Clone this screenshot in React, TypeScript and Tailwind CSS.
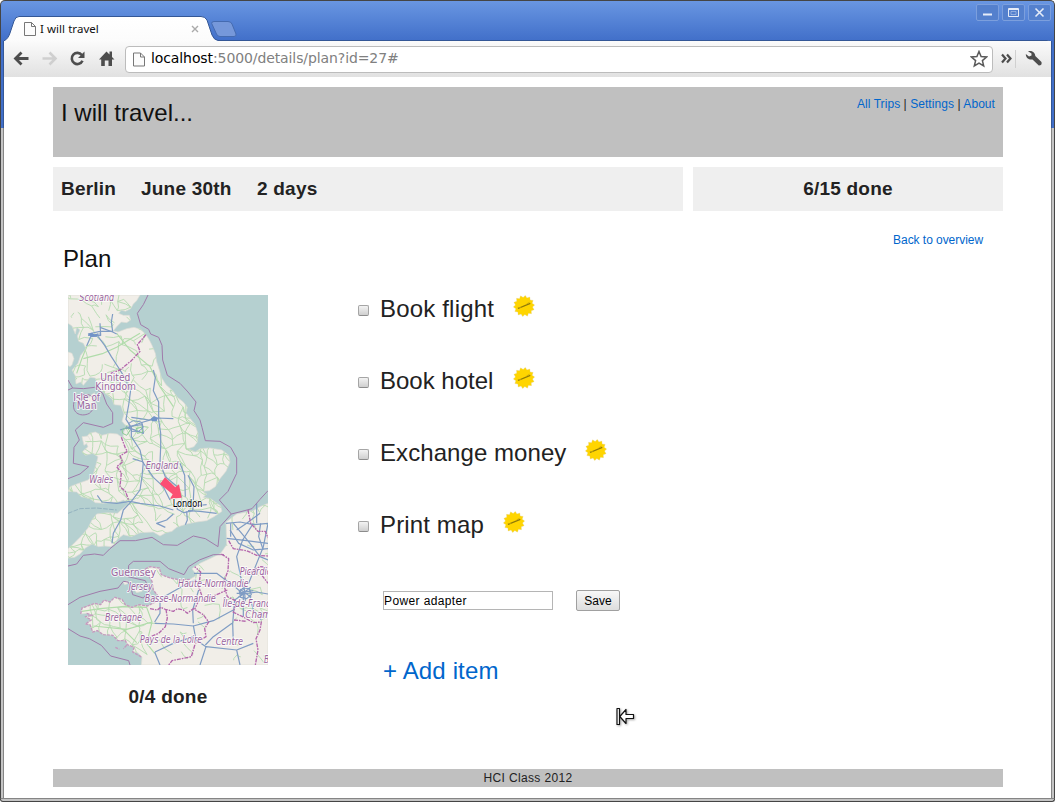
import React from "react";

const LAND_GB =
  "M24,15 L240,15 L230,32 L220,42 L212,56 L196,64 L184,60 L176,70 L190,76 L208,76 L212,90 L200,98 L184,96 L172,108 L160,122 L174,126 L200,116 L222,112 L242,118 L258,134 L268,150 L276,166 L286,190 L290,215 L298,240 L304,262 L318,284 L338,302 L352,322 L370,336 L382,352 L378,368 L390,385 L404,402 L414,430 L412,456 L402,470 L384,476 L406,486 L420,476 L450,474 L486,480 L506,496 L510,516 L498,544 L480,566 L466,590 L448,602 L428,604 L440,612 L430,622 L452,626 L482,648 L486,664 L462,680 L440,692 L410,696 L380,702 L350,712 L336,724 L318,728 L300,738 L280,726 L240,728 L214,740 L190,734 L172,748 L164,762 L152,770 L134,768 L116,770 L96,762 L76,774 L60,792 L44,802 L24,804 L24,776 L44,758 L64,738 L84,714 L96,690 L110,672 L140,668 L172,670 L188,656 L206,640 L190,630 L172,638 L150,636 L130,640 L106,638 L90,626 L64,620 L50,606 L24,604 L30,590 L56,580 L84,570 L100,552 L108,524 L114,500 L98,490 L76,496 L66,486 L84,470 L74,450 L88,430 L106,426 L126,436 L150,430 L172,432 L188,444 L192,424 L200,410 L186,394 L192,372 L182,346 L162,344 L156,326 L128,304 L116,296 L106,264 L90,262 L70,286 L62,276 L48,282 L46,258 L36,240 L54,220 L62,196 L78,176 L70,160 L56,154 L52,138 L60,120 L50,112 L46,132 L36,108 L24,100 Z";
const LAND_FR =
  "M498,696 L530,672 L580,662 L600,650 L624,640 L624,1125 L244,1125 L246,1102 L234,1088 L218,1086 L222,1072 L202,1064 L196,1052 L174,1052 L158,1036 L130,1034 L112,1022 L98,1026 L90,1004 L76,1002 L94,990 L76,980 L98,976 L80,970 L62,972 L66,954 L88,946 L104,940 L122,944 L132,930 L150,936 L164,922 L186,928 L196,944 L216,952 L238,944 L262,948 L286,936 L294,918 L280,900 L276,874 L254,838 L270,830 L298,834 L304,854 L330,864 L362,870 L390,868 L410,856 L396,836 L420,820 L458,802 L482,790 L500,764 Z";
const LAND_SMALL = [
  "M24,186 L36,190 L42,206 L36,224 L30,230 L24,226 Z",
  "M76,338 L92,316 L104,308 L102,330 L90,344 Z",
  "M66,440 L84,438 L92,452 L72,466 Z",
  "M190,876 L202,872 L206,880 L194,884 Z",
  "M222,898 L240,896 L246,904 L230,908 Z",
];

const ADMIN_SEA = [
  "M264,15 L250,44 L232,70 L242,104 L266,118 L272,132 L296,142 L306,166 L308,210 L322,256 L360,280 L384,306 L408,336 L402,362 L420,390 L426,412 L436,452 L480,454 L512,472 L530,504 L530,550 L504,604 L478,630 L514,672 L480,710 L474,770 L436,746 L400,738 L352,766 L310,764 L276,742 L226,752 L180,752 L150,776 L130,796 L104,792 L70,796 L50,822 L24,828",
  "M24,270 L38,294 L24,300 M38,294 L70,296 L104,292 L128,310 L140,342 L158,368 L158,400 L130,412 L70,398 L46,420 L58,450 L42,472 L40,520 L86,530 L60,552 L24,566",
  "M44,330 C30,366 60,384 88,370 C112,350 106,318 84,314 C62,312 52,316 44,330",
  "M24,944 L60,922 L120,904 L174,894 L190,874 L204,876 L212,890 L218,914 L250,924 L268,900 L256,872 L204,860 L206,826 L220,814 L300,814 L326,836 L372,854 L386,830 L418,810 L460,794 L492,794",
  "M24,1016 L60,1038 L88,1046 L124,1066 L152,1098 L206,1112 L210,1125",
  "M514,672 L546,664 L576,656 L600,628 L624,602",
];
const ADMIN_LAND = [
  "M258,134 L232,164 L240,184 L214,212 L180,240 L152,250",
  "M184,442 L196,474 L202,484 L180,498 L188,516 L170,530 L184,548 L180,590 L196,604 L206,630",
  "M564,660 L572,700 L594,724 L616,724 L624,744",
  "M506,752 L520,776 L560,782 L590,796 L624,798",
  "M484,792 L506,806 L504,842 L490,880 L502,920 L530,934 L520,966",
  "M502,900 L460,918 L430,930 L416,890 L422,846 L404,830",
  "M270,956 L292,960 L302,952 L316,958 L340,964 L352,956 L370,960 L382,970 L400,956 L430,974 L446,996 L434,1016 L438,1040 L406,1060 L394,1100 L366,1106 L336,1112 L326,1125",
  "M318,958 L322,984 L316,1010 L296,1030 L248,1050",
  "M518,966 L548,980 L580,998 L604,996 L600,1020 L588,1046 L594,1080 L586,1125",
  "M560,852 L600,830 L624,832 M606,856 L624,880 M416,932 L404,958 M522,990 L560,994",
];
const MOTORWAYS = [
  "M158,72 L154,96 L158,124 L120,124 L84,132 M120,100 L122,136 L92,140 L80,168 M110,134 L134,166 L154,200 L180,240 L192,260 L212,300 L206,345 L198,388 L214,412 L214,440 L240,480 L248,516 L280,562 L310,590 L330,630",
  "M84,136 L120,132 M120,112 L158,126 L170,132",
  "M280,240 L286,262 L280,302 L296,336 L296,390 L302,430 L302,470 L300,520 L316,560 L352,590 L364,622",
  "M214,382 L240,386 L266,390 L290,384 L340,386 M180,420 L212,410 L250,396 L286,386 M198,410 L250,430 L246,400",
  "M250,516 L246,560 L240,600 L214,634 L190,660 L182,690 L160,730 L156,760 M218,506 L250,516",
  "M112,616 L126,636 L170,640 L210,634 L240,640 L300,648 L340,660",
  "M360,520 L374,556 L376,620 M384,556 L402,590 L400,630 M340,648 L400,648 L440,644",
  "M340,672 L320,690 L290,700 L316,712 M380,664 L382,690 L376,704 M384,662 L420,664 L470,670",
  "M498,700 L540,696 L580,704 L624,700 M520,700 L570,760 L600,800 L624,810 M580,700 L548,750 L530,800 L550,900 M500,745 L560,752 L624,760",
  "M530,720 L560,700 L600,670 M510,720 L536,760 L580,780 L624,776 M602,700 L596,740 L610,780",
  "M402,850 L470,850 L524,890 L550,912 L590,906 L624,912 M550,912 L524,930 L518,1000 L520,1060 M550,912 L550,980 M566,880 L610,770 L624,700",
  "M284,996 L300,970 L300,936 L312,920 L362,892 L404,870 M284,1000 L340,1002 L400,1008 L460,992 L520,960 M400,1000 L398,960 L416,900 M400,1006 L408,1050 L438,1070 L530,1080 L580,1060 M438,1070 L420,1125 M285,1086 L340,1060 L400,1040 M284,1086 L300,1125 M530,1080 L540,1125",
  "M436,1065 L460,1040 L516,1000 M590,700 L590,640 M512,740 L512,700 M604,990 L580,960 L570,920",
  "M538,904 L550,894 L568,896 L574,914 L560,926 L542,922 Z M530,910 L580,902 M552,886 L556,934 M536,920 L572,892 M540,898 L574,922",
  "M350,640 L378,634 L400,646 L398,662 L372,668 L352,658 Z",
];

function roadNetwork(): string {
  let seed = 4177;
  const rnd = () => {
    seed = (seed * 16807) % 2147483647;
    return seed / 2147483647;
  };
  const step = 27;
  const cols = 25;
  const rows = 42;
  const pts: [number, number][][] = [];
  for (let r = 0; r < rows; r++) {
    pts.push([]);
    for (let c = 0; c < cols; c++) {
      pts[r].push([10 + c * step + (rnd() - 0.5) * 26, 5 + r * step + (rnd() - 0.5) * 26]);
    }
  }
  let d = "";
  const link = (a: [number, number], b: [number, number]) => {
    const mx = (a[0] + b[0]) / 2 + (rnd() - 0.5) * 10;
    const my = (a[1] + b[1]) / 2 + (rnd() - 0.5) * 10;
    d += `M${a[0].toFixed(1)},${a[1].toFixed(1)}L${mx.toFixed(1)},${my.toFixed(1)}L${b[0].toFixed(1)},${b[1].toFixed(1)}`;
  };
  for (let r = 0; r < rows - 1; r++) {
    for (let c = 0; c < cols - 1; c++) {
      const inFrance = r > 24 && c > 8;
      const north = r < 11;
      const p = inFrance ? 0.15 : north ? 0.42 : 0.8;
      if (rnd() < p) link(pts[r][c], pts[r][c + 1]);
      if (rnd() < p) link(pts[r][c], pts[r + 1][c]);
      if (rnd() < p * 0.55) link(pts[r][c], pts[r + 1][c + 1]);
    }
  }
  return d;
}

const LABELS: [string, number, number, number, boolean][] = [
  ["Scotland", 58, 33, 104, true],
  ["United", 121, 274, 90, false],
  ["Kingdom", 106, 301, 122, false],
  ["Isle of", 40, 332, 80, false],
  ["Man", 50, 356, 60, false],
  ["England", 257, 536, 98, true],
  ["Wales", 88, 578, 72, true],
  ["Guernsey", 153, 858, 135, false],
  ["Jersey", 206, 899, 72, true],
  ["Haute-Normandie", 354, 890, 212, true],
  ["Basse-Normandie", 254, 936, 213, true],
  ["Picardie", 539, 856, 96, true],
  ["Île-de-France", 488, 951, 158, true],
  ["Cham", 556, 983, 76, true],
  ["Bretagne", 135, 993, 111, true],
  ["Pays de la Loire", 240, 1060, 186, true],
  ["Centre", 467, 1066, 82, true],
  ["B", 612, 1120, 16, true],
];

function TripMap() {
  return (
    <svg viewBox="24 15 600 1110" className="block h-[370px] w-[200px]" aria-label="Map of the trip">
      <defs>
        <clipPath id="land">
          <path d={LAND_GB} />
          <path d={LAND_FR} />
        </clipPath>
      </defs>
      <rect x="24" y="15" width="600" height="1110" fill="#b5d0d0" />
      <g fill="#f1eee8" stroke="#dcdcd4" strokeWidth="2">
        <path d={LAND_GB} />
        <path d={LAND_FR} />
        {LAND_SMALL.map((d) => (
          <path key={d} d={d} />
        ))}
      </g>
      <g fill="none" strokeLinejoin="round">
        <g clipPath="url(#land)">
          <path d={roadNetwork()} stroke="#b6dcb2" strokeWidth="2.8" />
          <path
            d="M80,170 L64,210 L50,250 M70,206 L130,190 L170,172 L240,130 M170,130 L210,180 L270,230 L300,290 L340,350 M66,964 L120,956 L190,950 L260,952 L276,996 L200,1018 L100,1008 M276,996 L260,1060 L284,1090 M190,1018 L230,1058"
            stroke="#b0dcaa"
            strokeWidth="3.5"
          />
        </g>
        <path
          d="M62,972 L66,954 L88,946 L104,940 L122,944 L132,930 L150,936 L164,922 L186,928 L196,944 L216,952 L238,944 L262,948 L286,936 L294,918 L280,900 L276,874 L254,838 L270,830 L298,834 L304,854 L330,864 L362,870 L390,868 M80,970 L98,976 L76,980 L94,990 L76,1002 L90,1004 L98,1026 L112,1022 L130,1034 L158,1036 L174,1052 L196,1052 L202,1064 L222,1072 L218,1086 L246,1102 M166,1072 L178,1078 M200,1066 L190,1076"
          stroke="#c49abf"
          strokeWidth="4"
          strokeDasharray="9 3"
        />
        <path d="M24,670 L60,656 L110,654 L170,660" stroke="#94b3c0" strokeWidth="3" strokeDasharray="14 4" />
        <g stroke="#7f9cc4" strokeWidth="3.6">
          {MOTORWAYS.map((d) => (
            <path key={d} d={d} />
          ))}
        </g>
        <path d="M84,132 L96,128 L104,134 L114,130 L110,140 L92,140 Z M272,386 L282,378 L294,384 L290,394 L276,394 Z" fill="#7294c8" />
        <path d="M186,420 L200,412 L210,422 L200,436 L188,430 Z M228,416 L244,412 L248,426 L232,430 Z" stroke="#8acb94" strokeWidth="3" />
        <path d="M206,400 L220,392 L244,396 L250,412 L236,424 L214,424 Z M214,408 L248,404" stroke="#7f9cc4" strokeWidth="3" />
        <g stroke="#a07bab" strokeWidth="3">
          {ADMIN_SEA.map((d) => (
            <path key={d} d={d} />
          ))}
        </g>
        <g stroke="#b466ac" strokeWidth="4" strokeDasharray="12 3 5 3">
          {ADMIN_LAND.map((d) => (
            <path key={d} d={d} />
          ))}
        </g>
      </g>
      <g fontFamily="'DejaVu Sans', sans-serif" fontSize="31" fill="#9a649e" stroke="#fff" strokeWidth="6" strokeOpacity="0.8" paintOrder="stroke" strokeLinejoin="round">
        {LABELS.map(([t, x, y, w, it]) => (
          <text key={t} x={x} y={y} textLength={w} lengthAdjust="spacingAndGlyphs" fontStyle={it ? "italic" : "normal"}>
            {t}
          </text>
        ))}
      </g>
      <path d="M315,562 L346,592 L357,583 L365,623 L330,626 L338,613 L300,582 Z" fill="#fb4f73" />
      <text x="338" y="650" fontFamily="'DejaVu Sans', sans-serif" fontSize="29" fill="#000" stroke="#fff" strokeWidth="5" strokeOpacity="0.8" paintOrder="stroke" textLength="89" lengthAdjust="spacingAndGlyphs">
        London
      </text>
    </svg>
  );
}

function Sun() {
  const pts = Array.from({ length: 28 }, (_, i) => {
    const a = (i / 28) * Math.PI * 2 - 0.1;
    const r = i % 2 ? 8.6 : 10.7;
    return `${(11 + r * Math.cos(a)).toFixed(2)},${(11 + r * Math.sin(a)).toFixed(2)}`;
  }).join(" ");
  return (
    <svg viewBox="0 0 22 22" className="h-[22px] w-[22px]">
      <polygon points={pts} fill="#ffd500" stroke="#dccb80" strokeWidth="0.3" />
      <path d="M5 13.5 L17.300 8.300" fill="none" stroke="#8f7a08" strokeWidth="1.300" />
      <path d="M4.800 12.600 L8 12.500 M13.500 9 L16.500 7.300" fill="none" stroke="#c7a60a" strokeWidth="0.8" />
    </svg>
  );
}

function PageIcon({ className }: { className: string }) {
  return (
    <svg viewBox="0 0 12 14" className={className} fill="#fcfcfc" stroke="#777" strokeWidth="1">
      <path d="M.5 .5 H7.5 L11.5 4.5 V13.5 H.5 Z M7.5 .5 V4.5 H11.5" />
    </svg>
  );
}

function WindowButton({ children }: { children: React.ReactNode }) {
  return (
    <div className="flex h-[17px] w-[23px] items-center justify-center rounded-[2px] border border-[#7c9fdd] bg-[#5480cd]">
      <svg viewBox="0 0 21 15" className="h-[15px] w-[21px]" fill="none" stroke="#e6ecf8">
        {children}
      </svg>
    </div>
  );
}

function TitleBar() {
  return (
    <div className="relative flex h-[41px] shrink-0 justify-between rounded-t-[5px] border-x border-t border-[#454545] bg-linear-to-b from-[#6996e2] to-[#416fc9]">
      <svg viewBox="0 0 1055 41" className="absolute -top-px -left-px h-[41px] w-[1055px]">
        <defs>
          <linearGradient id="tab" x1="0" y1="0" x2="0" y2="1">
            <stop offset="0" stopColor="#ffffff" />
            <stop offset="1" stopColor="#fbfbfb" />
          </linearGradient>
        </defs>
        <path d="M3.5,41 C7,40 9,36 10,33 L14,21 Q15.5,16.5 19,16.5 H201 Q205,16.5 207,20 L212,35 Q214,40 218,40.5 H1047 Q1051,40.5 1051.5,44 H3.5 Z" fill="url(#tab)" stroke="#345796" strokeWidth="1" />
        <path d="M214,21.5 H228 Q231,21.5 232,24 L236,34 Q236.500,36.500 234,36.500 H220 Q217.500,36.500 216.500,34 L211.700,23.500 Q211.500,21.500 214,21.500 Z" fill="#7698da" stroke="#456bb0" />
      </svg>
      <div className="relative mt-[20px] ml-[23px] flex h-[16px] w-[178px] items-center">
        <PageIcon className="h-[14px] w-[12px]" />
        <span className="ml-[4px] flex-1 font-['Noto_Sans',sans-serif] text-[11.500px] leading-[16px] tracking-[0.05px] whitespace-nowrap text-[#111]">I will travel</span>
        <svg viewBox="0 0 8 8" className="mr-[3px] h-[8px] w-[8px]" stroke="#aaa" strokeWidth="1.400">
          <path d="M1 1 L7 7 M7 1 L1 7" />
        </svg>
      </div>
      <div className="relative mt-[3px] mr-[3px] flex gap-[3px]">
        <WindowButton>
          <path d="M6 9.500 H15" strokeWidth="2" />
        </WindowButton>
        <WindowButton>
          <path d="M5.500 3.500 H15.500 V11.500 H5.500 Z M5.500 4.500 H15.500" strokeWidth="1" />
          <path d="M8 6.500 H13 V9.500 H8 Z" strokeWidth="0.8" opacity="0.5" />
        </WindowButton>
        <WindowButton>
          <path d="M6.500 3.500 L14.500 11.500 M14.500 3.500 L6.500 11.500" strokeWidth="1.600" />
        </WindowButton>
      </div>
    </div>
  );
}

function Toolbar() {
  return (
    <div className="flex h-[36px] shrink-0 items-center bg-linear-to-b from-[#fbfbfb] to-[#e1e1e1]">
      <svg viewBox="0 0 116 36" className="h-[36px] w-[116px] shrink-0" fill="none">
        <path d="M24.500 17.500 H13 M17.500 11.500 L11.500 17.500 L17.500 23.500" stroke="#4d4d4d" strokeWidth="2.800" />
        <path d="M38.500 17.500 H50 M45.500 11.500 L51.500 17.500 L45.500 23.500" stroke="#cfcfcf" strokeWidth="2.600" />
        <path d="M77.800 14 A5.600 5.600 0 1 0 78.500 19.800" stroke="#4d4d4d" strokeWidth="2.600" />
        <path d="M80.500 10.500 V17 H74 Z" fill="#4d4d4d" />
        <path d="M95 18.500 L102.500 10.500 L105.500 13.500 V10.500 H108 V16 L110.500 18.500 H108 V25 H104.500 V19.500 H100.800 V25 H97.200 V18.500 Z" fill="#4d4d4d" />
      </svg>
      <div className="ml-[5px] flex h-[27px] w-[868px] shrink-0 items-center rounded-[4px] border border-[#bcbcbc] bg-white">
        <PageIcon className="ml-[7px] h-[15px] w-[12px]" />
        <span className="-mt-[3px] ml-[6px] flex-1 font-['DejaVu_Sans',sans-serif] text-[14px] leading-[20px] tracking-[-0.1px] whitespace-nowrap text-[#808080]">
          <span className="text-black">localhost</span>:5000/details/plan?id=27#
        </span>
        <svg viewBox="0 0 18 18" className="mr-[4px] h-[18px] w-[18px]" fill="#fff" stroke="#5a5a5a" strokeWidth="1.500">
          <path d="M9 1.500 L11.100 6.600 L16.500 7 L12.400 10.600 L13.700 16 L9 13.100 L4.300 16 L5.600 10.600 L1.500 7 L6.900 6.600 Z" />
        </svg>
      </div>
      <svg viewBox="0 0 58 36" className="h-[36px] w-[58px] shrink-0" fill="none">
        <path d="M9 13.500 L12.500 17.500 L9 21.500 M14 13.500 L17.500 17.500 L14 21.500" stroke="#4d4d4d" strokeWidth="2.200" />
        <path d="M22.500 9 V27" stroke="#d0d0d0" />
        <path d="M35 10.300 C38 9.300 42 10.500 42.300 15 L48.500 21 Q49.300 24.500 45.800 24.500 L39.500 18.500 C36 19 33 17.500 32.800 13 L36 15.500 L38.500 14.500 L38.500 12.500 Z" fill="#4d4d4d" />
      </svg>
    </div>
  );
}

const ITEMS: [string, string][] = [
  ["Book flight", "w-[133px] tracking-[0.18px]"],
  ["Book hotel", "w-[133px]"],
  ["Exchange money", "w-[205px] tracking-[0.07px]"],
  ["Print map", "w-[123px] tracking-[0.13px]"],
];

function Page() {
  return (
    <div className="flex flex-1 flex-col bg-white pt-[10px] pr-[48px] pl-[49px] font-['Liberation_Sans',Arial,sans-serif] text-[12px] text-[#222]">
      <header className="flex h-[70px] shrink-0 justify-between bg-[#c0c0c0] px-[8px]">
        <h1 className="mt-[8px] text-[24px] leading-[36px] text-[#111]">I will travel...</h1>
        <nav className="mt-[8px] leading-[18px] tracking-[0.06px] text-[#222]">
          <a className="text-[#0066cc]">All Trips</a> | <a className="text-[#0066cc]">Settings</a> | <a className="text-[#0066cc]">About</a>
        </nav>
      </header>
      <div className="mt-[10px] flex h-[44px] shrink-0 gap-[10px] text-[19px] leading-[43px] font-bold tracking-[0.22px]">
        <div className="flex w-[630px] bg-[#efefef] pl-[8px]">
          <span className="w-[80px]">Berlin</span>
          <span className="w-[116px]">June 30th</span>
          <span>2 days</span>
        </div>
        <div className="w-[310px] bg-[#efefef] text-center">6/15 done</div>
      </div>
      <div className="flex h-[84px] shrink-0 justify-between pr-[20px] pl-[10px]">
        <h2 className="mt-[30px] text-[24px] leading-[36px] tracking-[0.1px] text-[#111]">Plan</h2>
        <a className="mt-[20px] leading-[18px] tracking-[-0.05px] text-[#0066cc]">Back to overview</a>
      </div>
      <main className="flex shrink-0 pl-[15px]">
        <aside className="w-[200px]">
          <TripMap />
          <div className="mt-[18px] text-center text-[19px] leading-[27px] font-bold tracking-[0.22px]">0/4 done</div>
        </aside>
        <section className="ml-[90px] h-[474px] flex-1">
          {ITEMS.map(([label, textClass]) => (
            <div key={label} className="flex h-[72px] text-[24px] leading-[28px]">
              <span className="mt-[10px] h-[11px] w-[11px] rounded-[2px] border border-[#a5a5a5] border-b-[#8c8c8c] bg-linear-to-b from-[#f3f3f3] to-[#cfcfcf]" />
              <span className={`ml-[11px] whitespace-nowrap ${textClass}`}>{label}</span>
              <Sun />
            </div>
          ))}
          <div className="flex h-[72px] pt-[7px] pl-[25px] text-black">
            <input readOnly value="Power adapter" className="mt-[1px] h-[19px] w-[170px] border border-[#b5b5b5] bg-white px-0 text-[12px] tracking-[0.38px] outline-none" />
            <button className="ml-[23px] h-[21px] w-[44px] rounded-[2px] border border-[#a0a0a0] bg-linear-to-b from-[#f8f8f8] to-[#dddddd] text-[12px] leading-[20px]">Save</button>
          </div>
          <div className="relative pl-[25px]">
            <a className="text-[24px] leading-[32px] tracking-[0.15px] text-[#0066cc]">+ Add item</a>
            <svg viewBox="0 0 20 20" className="absolute top-[52px] left-[257px] h-[20px] w-[20px] drop-shadow-[1px_1px_1px_rgba(0,0,0,0.35)]" fill="#fff" stroke="#111" strokeWidth="1.200" strokeLinejoin="round">
              <path d="M2 1.500 H4.500 V17.500 H2 Z M4.800 9.500 L11 2.500 V7.500 H18.500 V11.500 H11 V16.500 Z" />
            </svg>
          </div>
        </section>
      </main>
      <footer className="h-[18px] shrink-0 bg-[#c0c0c0] text-center leading-[18px] tracking-[0.36px]">HCI Class 2012</footer>
    </div>
  );
}

export default function App() {
  return (
    <div className="flex h-[802px] w-[1055px] flex-col overflow-hidden">
      <TitleBar />
      <div className="flex h-[757px] shrink-0">
        <div className="flex w-[4px] shrink-0">
          <div className="w-px bg-[#454545]" />
          <div className="flex w-[3px] flex-col">
            <div className="h-[87px] border-r border-[#345796] bg-[#416fc9]" />
            <div className="flex-1 border-r border-[#858585] bg-[#c4c4c4]" />
          </div>
        </div>
        <div className="flex min-w-0 flex-1 flex-col">
          <Toolbar />
          <Page />
        </div>
        <div className="flex w-[4px] shrink-0">
          <div className="flex w-[3px] flex-col">
            <div className="h-[87px] border-l border-[#345796] bg-[#416fc9]" />
            <div className="flex-1 border-l border-[#858585] bg-[#c4c4c4]" />
          </div>
          <div className="w-px bg-[#454545]" />
        </div>
      </div>
      <div className="h-[4px] shrink-0 rounded-b-[3px] border-x border-t border-b border-x-[#454545] border-t-[#858585] border-b-[#454545] bg-[#c4c4c4]" />
    </div>
  );
}
